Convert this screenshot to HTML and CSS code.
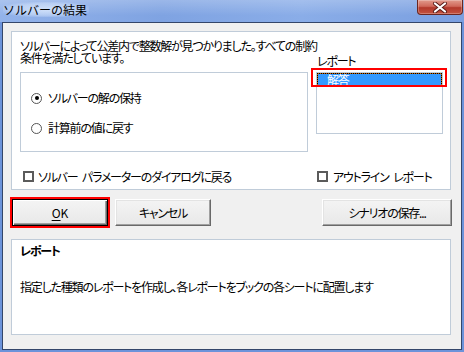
FILE: index.html
```html
<!DOCTYPE html>
<html lang="ja">
<head>
<meta charset="utf-8">
<title>ソルバーの結果</title>
<link rel="stylesheet" href="styles.css">
</head>
<body>
<div class="window">
  <div class="titlebar">
    <span class="title">ソルバーの結果</span>
    <div class="close">
      <svg width="16" height="11" viewBox="0 0 16 11"><path d="M3 1.5 L13 9.5 M13 1.5 L3 9.5" stroke="#5a1b17" stroke-width="4" stroke-linecap="round"/><path d="M3 1.5 L13 9.5 M13 1.5 L3 9.5" stroke="#fff" stroke-width="2.2" stroke-linecap="round"/></svg>
    </div>
  </div>
  <div class="client">
    <div class="panel top-panel">
      <div class="col-left">
        <p class="message">ソルバーによって公差内で整数解が見つかりました。すべての制約<br>条件を満たしています。</p>
        <div class="group">
          <div class="radio-row"><span class="radio checked"></span><span>ソルバーの解の保持</span></div>
          <div class="radio-row"><span class="radio"></span><span>計算前の値に戻す</span></div>
        </div>
      </div>
      <div class="col-right">
        <div class="list-label">レポート</div>
        <div class="listbox"><div class="list-item">解答</div></div>
      </div>
      <div class="check-row check-left"><span class="checkbox"></span><span>ソルバー パラメーターのダイアログに戻る</span></div>
      <div class="check-row check-right"><span class="checkbox"></span><span>アウトライン レポート</span></div>
      <div class="annot annot-list"></div>
    </div>
    <div class="button-row">
      <div class="btn-wrap">
        <div class="btn btn-default"><span><u>O</u>K</span></div>
        <div class="annot annot-ok"></div>
      </div>
      <div class="btn">キャンセル</div>
      <div class="btn btn-wide">シナリオの保存...</div>
    </div>
    <div class="panel bottom-panel">
      <div class="desc-title">レポート</div>
      <div class="desc">指定した種類のレポートを作成し、各レポートをブックの各シートに配置します</div>
    </div>
  </div>
</div>
</body>
</html>
```

FILE: styles.css
```css
* { box-sizing: border-box; }
html, body {
  margin: 0;
  padding: 0;
  width: 464px;
  height: 352px;
  overflow: hidden;
  font-family: "Noto Sans CJK JP", "Noto Sans", sans-serif;
  font-size: 12px;
  color: #000;
  font-feature-settings: "palt";
}
.window {
  width: 464px;
  height: 352px;
  background: #6c93da;
  display: flex;
  flex-direction: column;
}
.titlebar {
  height: 22px;
  display: flex;
  align-items: flex-start;
  background:
    linear-gradient(180deg, rgba(255,255,255,0.22), rgba(255,255,255,0) 70%),
    linear-gradient(90deg, #93b3ea 0%, #7fa3e2 35%, #8aade8 65%, #7a9fe0 100%);
}
.title {
  margin: 2px 0 0 3px;
  padding: 0 2px 0 0;
  line-height: 15px;
  font-size: 12px;
  font-feature-settings: normal;
  background: radial-gradient(ellipse at center, rgba(215,230,252,0.9) 0%, rgba(215,230,252,0.5) 55%, rgba(215,230,252,0) 80%);
}
.close {
  margin-left: auto;
  margin-right: 1px;
  width: 46px;
  height: 15px;
  border: 1px solid #6b2620;
  border-top: none;
  border-radius: 0 0 4px 4px;
  background: linear-gradient(180deg, #e19a8c 0%, #d0685a 45%, #b3382b 55%, #c4533f 100%);
  display: flex;
  align-items: center;
  justify-content: center;
  box-shadow: inset 0 0 0 1px rgba(255,255,255,0.25);
}
.client {
  margin: 0 2px 2px 2px;
  height: 328px;
  border: 1px solid #34466a;
  background: #f0f0f0;
  padding: 8px 0 0 8px;
  letter-spacing: -1.2px;
}
.panel {
  width: 440px;
  background: #fff;
  border: 1px solid #c0ccd9;
}
.top-panel {
  position: relative;
  height: 159px;
  display: grid;
  grid-template-columns: 288px 127px;
  grid-template-rows: auto auto;
  column-gap: 8px;
  align-items: start;
  padding: 8px 0 0 8px;
}
.message {
  margin: 0;
  line-height: 12px;
  white-space: nowrap;
}
.group {
  margin-top: 8px;
  height: 80px;
  border: 1px solid #c0ccd9;
  padding: 18px 0 0 10px;
  display: flex;
  flex-direction: column;
  gap: 16px;
}
.radio-row {
  height: 14px;
  display: flex;
  align-items: center;
  gap: 6px;
  line-height: 12px;
}
.radio {
  width: 11px;
  height: 11px;
  border-radius: 50%;
  border: 1.5px solid #555;
  background: #fff;
  display: flex;
  align-items: center;
  justify-content: center;
  flex: none;
}
.radio.checked::after {
  content: "";
  width: 4px;
  height: 4px;
  border-radius: 50%;
  background: #000;
}
.col-right {
  padding-top: 15px;
}
.list-label {
  line-height: 12px;
  padding-left: 1px;
}
.listbox {
  margin-top: 5px;
  height: 62px;
  border: 1px solid #c0ccd9;
  background: #fff;
}
.list-item {
  height: 13px;
  border: 1px dotted #000;
  background: linear-gradient(#3399ff, #3399ff) padding-box, #cc6600;
  color: #fff;
  line-height: 11px;
  padding-left: 9px;
}
.check-row {
  margin-top: 12px;
  height: 14px;
  display: flex;
  align-items: center;
  gap: 4px;
  line-height: 12px;
  white-space: nowrap;
  word-spacing: 3px;
}
.check-left { padding-left: 3px; }
.check-right { padding-left: 1px; gap: 5px; }
.checkbox {
  width: 11px;
  height: 11px;
  border: 2px solid #5b5b5b;
  background: #fff;
  flex: none;
}
.annot {
  position: absolute;
  border: 2px solid #ff0000;
  pointer-events: none;
}
.annot-list {
  left: 299px;
  top: 36px;
  width: 136px;
  height: 19px;
}
.button-row {
  margin-top: 9px;
  width: 441px;
  padding-left: 1px;
  display: flex;
  gap: 7px;
}
.btn-wrap {
  position: relative;
}
.btn {
  width: 96px;
  height: 27px;
  display: flex;
  align-items: center;
  justify-content: center;
  background: linear-gradient(180deg, #f4f4f4, #e8e8e8);
  border: 1px solid;
  border-color: #fff #696969 #696969 #fff;
  box-shadow: inset -1px -1px 0 #a0a0a0, inset 1px 1px 0 #e3e3e3;
  line-height: 12px;
}
.btn-default {
  border: 1px solid #000;
  box-shadow: inset 1px 1px 0 #fff, inset -1px -1px 0 #696969, inset -2px -2px 0 #a0a0a0;
  letter-spacing: 0;
}
.btn-default u { text-underline-offset: 2px; }
.btn-wide {
  width: 130px;
  margin-left: auto;
}
.annot-ok {
  left: -2px;
  top: -2px;
  width: 100px;
  height: 31px;
}
.bottom-panel {
  margin-top: 13px;
  height: 96px;
  padding: 5px 0 0 8px;
}
.desc-title {
  font-weight: bold;
  line-height: 12px;
}
.desc {
  margin-top: 24px;
  line-height: 12px;
  white-space: nowrap;
}
```
